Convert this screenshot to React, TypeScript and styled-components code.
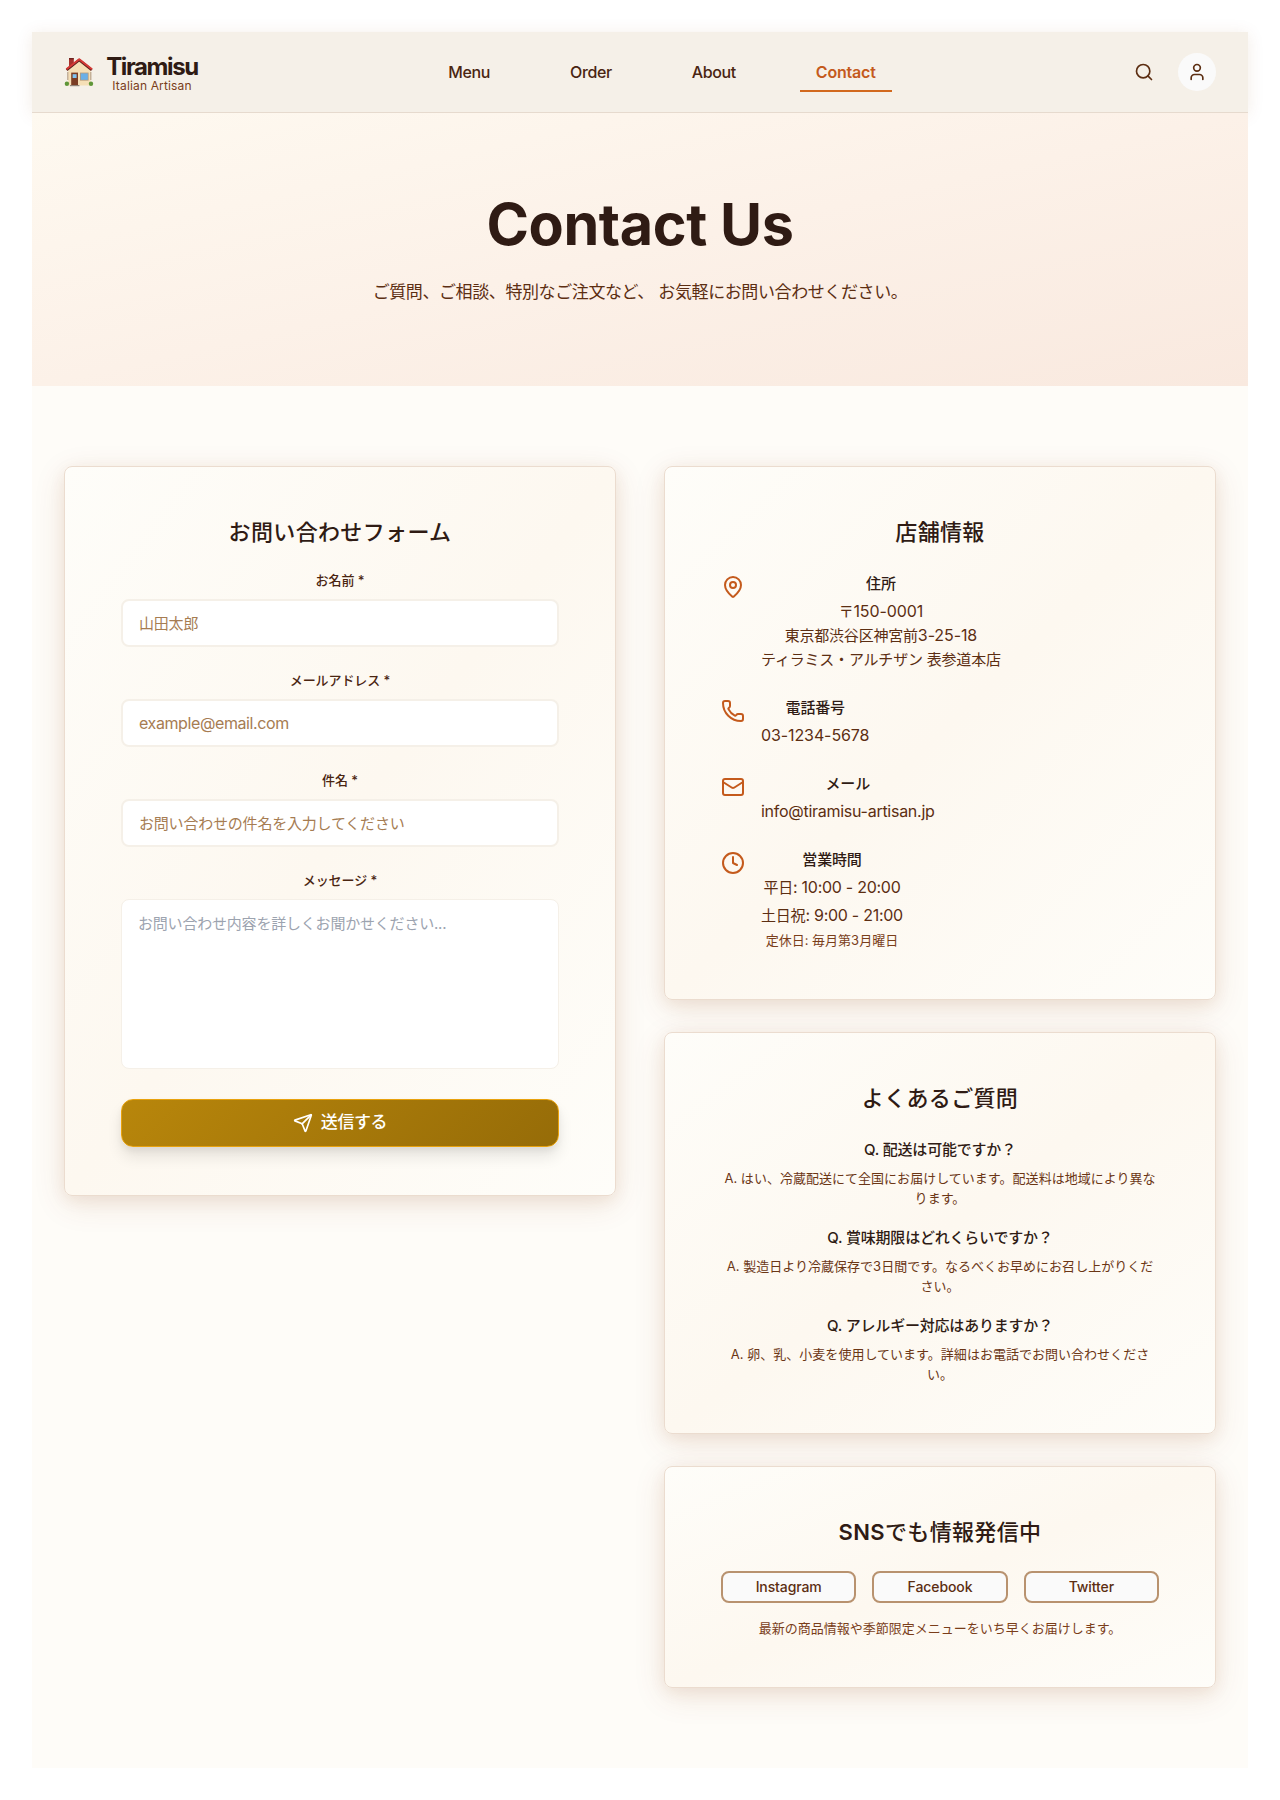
import React from 'react';
import styled, { createGlobalStyle, css } from 'styled-components';
import { Search, User, MapPin, Phone, Mail, Clock, Send } from 'lucide-react';

const Global = createGlobalStyle`
  *, *::before, *::after { box-sizing: border-box; }
  body { margin: 0; background: #ffffff; }
  #root { padding: 32px; }
  h1, h2, h3, p { margin: 0; }
  body, input, textarea, button {
    font-family: Inter, 'Noto Sans CJK JP', 'Liberation Sans', sans-serif;
  }
`;

const body15 = css`
  font-size: 15px;
  line-height: 24px;
  letter-spacing: -0.2px;
`;
const small13 = css`
  font-size: 13px;
  line-height: 20px;
  letter-spacing: 0;
`;
const nudgeDown = css`
  margin: 1px 0 -1px;
`;
const nudgeUp = css`
  margin: -1px 0 1px;
`;

const Page = styled.div`
  min-height: 1736px;
  background: #fefcf8;
  text-align: center;
  color: #2f1b14;
`;

const Header = styled.header`
  height: 81px;
  padding: 0 32px;
  display: flex;
  align-items: center;
  justify-content: space-between;
  background: #f5f0e8;
  border-bottom: 1px solid #e6dace;
  box-shadow: 0 2px 16px rgba(139, 69, 19, 0.1);
`;
const Logo = styled.div`
  display: flex;
  align-items: center;
  gap: 12px;
`;
const LogoText = styled.div`
  width: 92px;
  padding-top: 4px;
`;
const LogoName = styled.div`
  font-size: 24px;
  font-weight: 700;
  line-height: 24px;
  letter-spacing: -1.4px;
  white-space: nowrap;
`;
const LogoTag = styled.div`
  font-size: 12px;
  line-height: 14px;
  letter-spacing: 0.15px;
  color: #7a3e1a;
`;
const Nav = styled.nav`
  display: flex;
  gap: 48px;
`;
const NavItem = styled.a<{ $active?: boolean }>`
  height: 40px;
  padding: 8px 16px 6px;
  font-size: 16px;
  font-weight: ${(p) => (p.$active ? 600 : 500)};
  line-height: 24px;
  letter-spacing: ${(p) => (p.$active ? -0.2 : -0.38)}px;
  color: ${(p) => (p.$active ? '#c45a1c' : '#4a2511')};
  border-bottom: 2px solid ${(p) => (p.$active ? '#d2691e' : 'transparent')};
`;
const Actions = styled.div`
  display: flex;
  align-items: center;
  gap: 16px;
  color: #5c2e12;
`;
const IconButton = styled.button<{ $filled?: boolean }>`
  display: grid;
  place-items: center;
  width: ${(p) => (p.$filled ? 38 : 36)}px;
  height: ${(p) => (p.$filled ? 38 : 36)}px;
  padding: 0;
  border: 0;
  border-radius: 50%;
  color: inherit;
  background: ${(p) => (p.$filled ? '#fafafa' : 'transparent')};
`;

const Hero = styled.section`
  height: 273px;
  padding: 80px 32px;
  background: linear-gradient(to bottom right, #fef9f0 0%, #fcf1e8 50%, #f9e9df 100%);
`;
const HeroTitle = styled.h1`
  margin-bottom: 24px;
  padding-top: 1px;
  font-size: 57.5px;
  font-weight: 700;
  line-height: 60.6px;
  letter-spacing: -0.4px;
`;
const HeroText = styled.p`
  font-size: 17px;
  line-height: 27.2px;
  letter-spacing: -0.4px;
  color: #5c2e12;
`;

const Main = styled.main`
  display: grid;
  grid-template-columns: 1fr 1fr;
  align-items: start;
  gap: 48px;
  padding: 80px 32px;
`;
const Column = styled.div`
  display: grid;
  gap: 32px;
`;
const Card = styled.section`
  padding: 48px 56px;
  border: 1px solid #ebdccf;
  border-radius: 8px;
  background: linear-gradient(to bottom right, #fefdf9 0%, #fdf8f0 50%, #fefdf9 100%);
  box-shadow: 0 4px 16px rgba(139, 69, 19, 0.08), 0 8px 32px rgba(139, 69, 19, 0.12);
`;
const CardTitle = styled.h2`
  margin-bottom: 23px;
  padding-top: 1px;
  font-size: 22px;
  font-weight: 500;
  line-height: 32px;
  letter-spacing: 0.35px;
`;
const Strong = styled.span`
  font-weight: 600;
`;

const Form = styled.form`
  display: grid;
`;
const Field = styled.div<{ $gap?: number }>`
  display: grid;
  gap: 8px;
  margin-bottom: ${(p) => p.$gap ?? 24}px;
`;
const Label = styled.label`
  ${small13}
  ${nudgeUp}
  letter-spacing: -0.08px;
  font-weight: 500;
  color: #4a2511;
`;
const Input = styled.input`
  ${body15}
  font-size: ${(p) => (p.type === 'email' ? 16 : 15)}px;
  letter-spacing: ${(p) => (p.type === 'email' ? -0.4 : -0.2)}px;
  width: 100%;
  height: 48px;
  padding: 0 16px;
  border: 2px solid #f5f0e8;
  border-radius: 8px;
  background: #fff;
  outline: 0;
  &::placeholder { color: #a67c52; opacity: 1; }
`;
const TextArea = styled.textarea`
  ${body15}
  width: 100%;
  height: 170px;
  padding: 12px 16px;
  border: 1px solid #f5f0e8;
  border-radius: 8px;
  background: #fff;
  resize: none;
  outline: 0;
  &::placeholder { color: #9ca3af; opacity: 1; }
`;
const Submit = styled.button`
  display: flex;
  align-items: center;
  justify-content: center;
  gap: 8px;
  height: 48px;
  padding: 0;
  border: 1px solid #e8a20e;
  border-radius: 12px;
  color: #fff;
  background: linear-gradient(135deg, #b8860b 0%, #966c08 100%);
  box-shadow: 0 4px 6px rgba(0, 0, 0, 0.05), 0 10px 15px rgba(0, 0, 0, 0.09);
`;
const SubmitText = styled.span`
  padding-bottom: 3px;
  font-size: 17px;
  font-weight: 500;
  line-height: 24px;
  letter-spacing: -0.41px;
`;

const InfoList = styled.div`
  display: grid;
  gap: 24px;
`;
const InfoRow = styled.div`
  display: flex;
  align-items: flex-start;
  gap: 16px;
`;
const InfoIcon = styled.span`
  display: flex;
  margin-top: 4px;
  color: #c45a1c;
`;
const InfoBody = styled.div`
  display: grid;
  gap: 4px;
`;
const ItemTitle = styled.h3`
  ${body15}
  ${nudgeDown}
  font-weight: 500;
`;
const InfoText = styled.p`
  ${body15}
  ${nudgeDown}
  color: #5c2e12;
`;
const Latin = styled.span<{ $tight?: boolean }>`
  font-size: 16px;
  line-height: 1;
  letter-spacing: ${(p) => (p.$tight ? -0.27 : -0.1)}px;
`;
const Note = styled.p`
  ${small13}
  ${nudgeUp}
  color: #7a3e1a;
`;

const FaqList = styled.div`
  display: grid;
  gap: 16px;
`;
const Faq = styled.div`
  display: grid;
  gap: 8px;
`;
const Answer = styled.p`
  ${small13}
  ${nudgeUp}
  letter-spacing: 0.02px;
  color: #6b3615;
`;

const SocialRow = styled.div`
  display: grid;
  grid-template-columns: repeat(3, 1fr);
  gap: 16px;
  margin-bottom: 16px;
`;
const SocialButton = styled.button`
  height: 32px;
  padding: 0;
  border: 2px solid #b8926f;
  border-radius: 8px;
  background: #fafafa;
  color: #5c2e12;
  font-size: 14px;
  font-weight: 500;
  line-height: 20px;
  letter-spacing: -0.1px;
`;

const House = () => (
  <svg width="30" height="32" viewBox="0 0 30 32">
    <rect x="5" y="2.4" width="4.8" height="9" fill="#a8322c" />
    <rect x="5" y="2" width="4.8" height="1.4" fill="#6e2420" />
    <path d="M4.2 14 15.2 4.4 26.6 14v15.6H4.2z" fill="#f5dfb6" />
    <path d="M2.6 14 15.2 4 27.8 14" fill="none" stroke="#5f1f1b" strokeWidth="2.6" strokeLinejoin="round" />
    <path d="M2.4 13.2 15.2 3.2 28 13.2" fill="none" stroke="#d63a36" strokeWidth="2" strokeLinejoin="round" />
    <rect x="3.2" y="16" width="1.2" height="8" fill="#b9a38a" />
    <rect x="26.2" y="16" width="1.2" height="8" fill="#b9a38a" />
    <rect x="7.2" y="16.6" width="6.8" height="13" fill="#7a3d24" />
    <rect x="8.6" y="18.2" width="4" height="3.8" fill="#80c4f2" />
    <rect x="16" y="16.6" width="8.6" height="8" fill="#b59a7a" />
    <rect x="16.8" y="17.4" width="7" height="6.4" fill="#6cb0e6" />
    <rect x="6" y="29" width="9.4" height="1.2" fill="#8f8378" />
    <circle cx="2.9" cy="27.7" r="2.2" fill="#5f9638" />
    <circle cx="27" cy="27.7" r="2.2" fill="#5f9638" />
  </svg>
);

const fields = [
  { label: 'お名前 *', hint: '山田太郎', type: 'text' },
  { label: 'メールアドレス *', hint: 'example@email.com', type: 'email' },
  { label: '件名 *', hint: 'お問い合わせの件名を入力してください', type: 'text' },
];
const faqs = [
  ['Q. 配送は可能ですか？', 'A. はい、冷蔵配送にて全国にお届けしています。配送料は地域により異なります。'],
  ['Q. 賞味期限はどれくらいですか？', 'A. 製造日より冷蔵保存で3日間です。なるべくお早めにお召し上がりください。'],
  ['Q. アレルギー対応はありますか？', 'A. 卵、乳、小麦を使用しています。詳細はお電話でお問い合わせください。'],
];

export default function App() {
  return (
    <>
      <Global />
      <Page>
        <Header>
          <Logo>
            <House />
            <LogoText>
              <LogoName>Tiramisu</LogoName>
              <LogoTag>Italian Artisan</LogoTag>
            </LogoText>
          </Logo>
          <Nav>
            <NavItem>Menu</NavItem>
            <NavItem>Order</NavItem>
            <NavItem>About</NavItem>
            <NavItem $active>Contact</NavItem>
          </Nav>
          <Actions>
            <IconButton aria-label="Search"><Search size={20} /></IconButton>
            <IconButton $filled aria-label="Account"><User size={20} /></IconButton>
          </Actions>
        </Header>
        <Hero>
          <HeroTitle>Contact Us</HeroTitle>
          <HeroText>ご質問、ご相談、特別なご注文など、 お気軽にお問い合わせください。</HeroText>
        </Hero>
        <Main>
          <Card>
            <CardTitle>お問い合わせフォーム</CardTitle>
            <Form>
              {fields.map((f) => (
                <Field key={f.label}>
                  <Label>{f.label}</Label>
                  <Input type={f.type} placeholder={f.hint} />
                </Field>
              ))}
              <Field $gap={30}>
                <Label>メッセージ *</Label>
                <TextArea placeholder="お問い合わせ内容を詳しくお聞かせください..." />
              </Field>
              <Submit type="button"><Send size={20} /><SubmitText>送信する</SubmitText></Submit>
            </Form>
          </Card>
          <Column>
            <Card>
              <CardTitle>店舗情報</CardTitle>
              <InfoList>
                <InfoRow>
                  <InfoIcon><MapPin size={24} /></InfoIcon>
                  <InfoBody>
                    <ItemTitle>住所</ItemTitle>
                    <InfoText>
                      〒<Latin>150-0001</Latin><br />
                      東京都渋谷区神宮前<Latin>3-25-18</Latin><br />
                      ティラミス・アルチザン 表参道本店
                    </InfoText>
                  </InfoBody>
                </InfoRow>
                <InfoRow>
                  <InfoIcon><Phone size={24} /></InfoIcon>
                  <InfoBody>
                    <ItemTitle>電話番号</ItemTitle>
                    <InfoText><Latin>03-1234-5678</Latin></InfoText>
                  </InfoBody>
                </InfoRow>
                <InfoRow>
                  <InfoIcon><Mail size={24} /></InfoIcon>
                  <InfoBody>
                    <ItemTitle>メール</ItemTitle>
                    <InfoText><Latin $tight>info@tiramisu-artisan.jp</Latin></InfoText>
                  </InfoBody>
                </InfoRow>
                <InfoRow>
                  <InfoIcon><Clock size={24} /></InfoIcon>
                  <InfoBody>
                    <ItemTitle>営業時間</ItemTitle>
                    <InfoText>平日<Latin $tight>: 10:00 - 20:00</Latin></InfoText>
                    <InfoText>土日祝<Latin $tight>: 9:00 - 21:00</Latin></InfoText>
                    <Note>定休日: 毎月第3月曜日</Note>
                  </InfoBody>
                </InfoRow>
              </InfoList>
            </Card>
            <Card>
              <CardTitle>よくあるご質問</CardTitle>
              <FaqList>
                {faqs.map(([q, a]) => (
                  <Faq key={q}>
                    <ItemTitle>{q}</ItemTitle>
                    <Answer>{a}</Answer>
                  </Faq>
                ))}
              </FaqList>
            </Card>
            <Card>
              <CardTitle><Strong>SNS</Strong>でも情報発信中</CardTitle>
              <SocialRow>
                <SocialButton>Instagram</SocialButton>
                <SocialButton>Facebook</SocialButton>
                <SocialButton>Twitter</SocialButton>
              </SocialRow>
              <Note>最新の商品情報や季節限定メニューをいち早くお届けします。</Note>
            </Card>
          </Column>
        </Main>
      </Page>
    </>
  );
}
